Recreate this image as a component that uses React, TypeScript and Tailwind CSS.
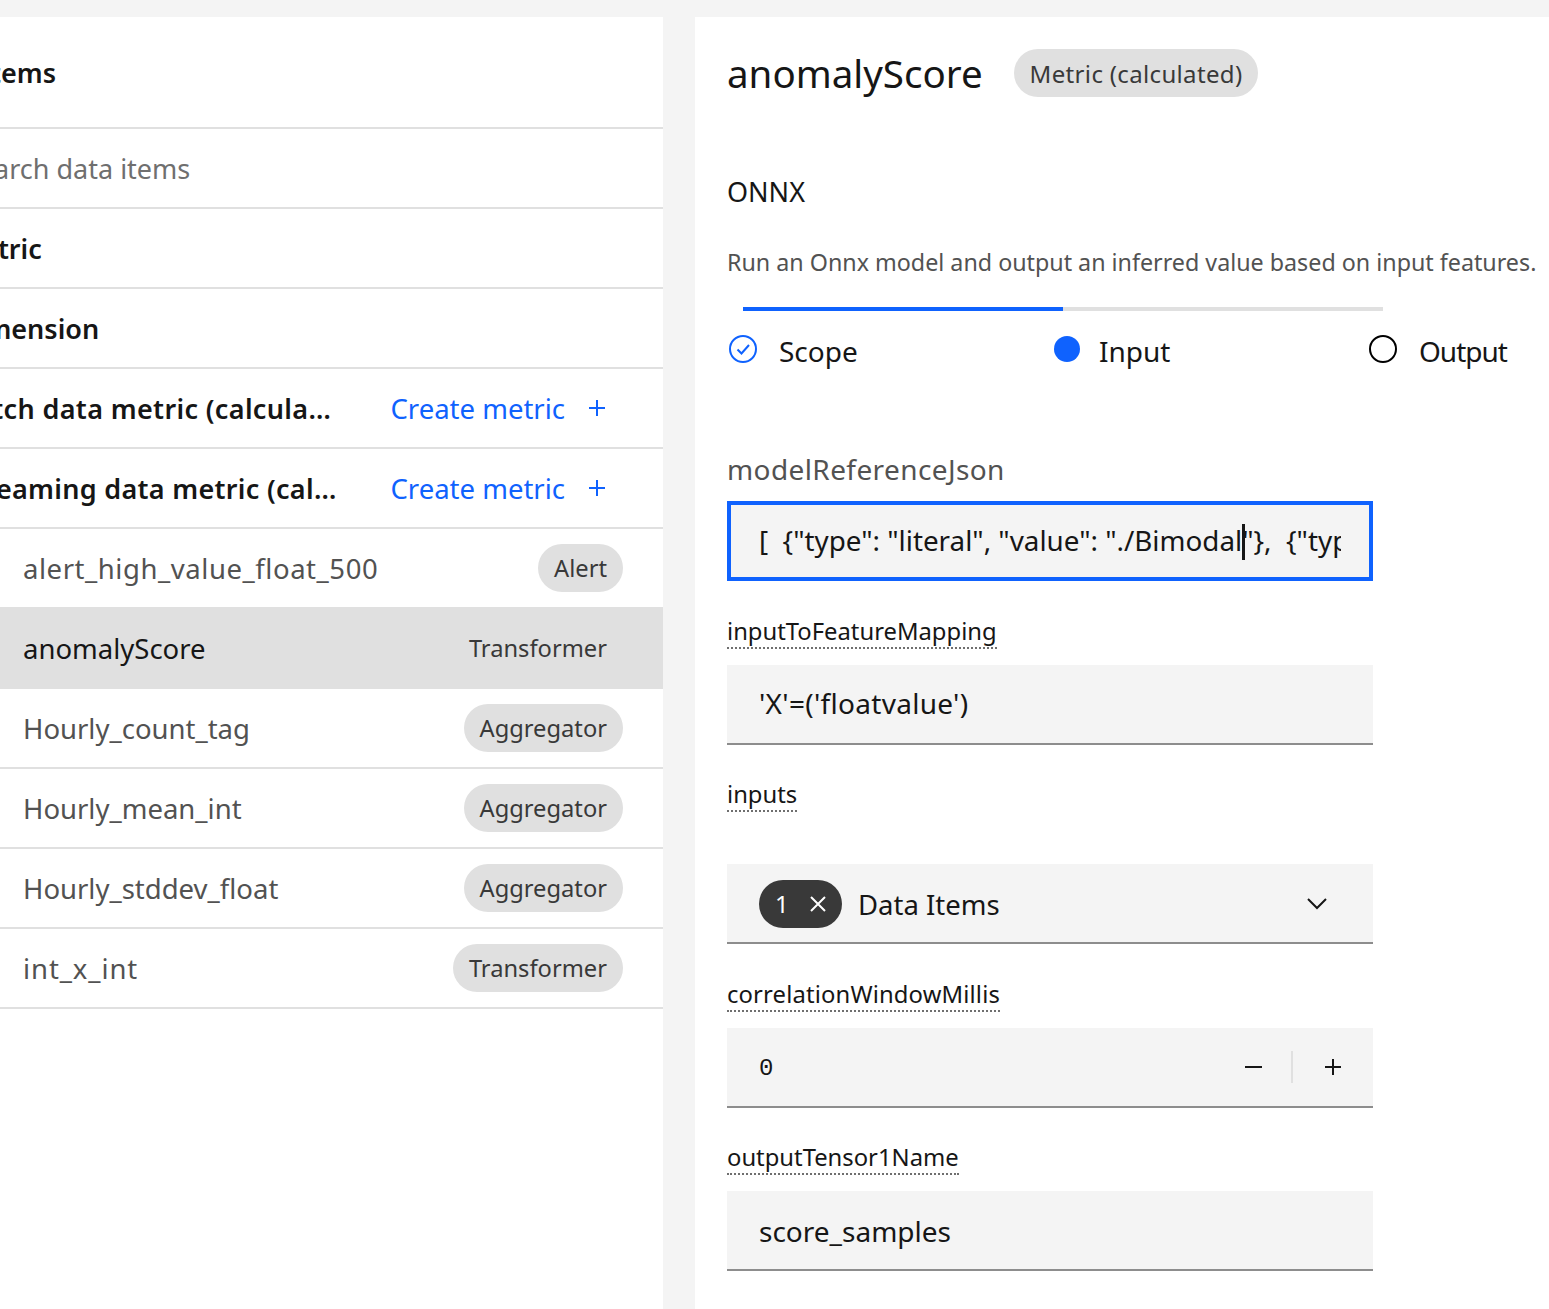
const font = "font-['Noto_Sans','Open_Sans',sans-serif]";

function Tag({ label, flat, className }: { label: string; flat?: boolean; className?: string }) {
  return (
    <span
      className={`flex h-12 shrink-0 items-center rounded-full px-4 pt-[2px] leading-none text-[#393939] ${
        flat ? '' : 'bg-[#e0e0e0]'
      } ${className ?? 'text-[23.7px]'}`}
    >
      {label}
    </span>
  );
}

function HeaderRow({ text, textClass, action, height }: { text: string; textClass: string; action?: boolean; height?: string }) {
  return (
    <div className={`flex items-center border-b-2 border-[#e0e0e0] pr-[56px] ${height ?? 'h-20'}`}>
      <span className={`min-w-0 truncate pt-[2px] text-[27px] font-semibold text-[#161616] ${textClass}`}>{text}</span>
      {action && (
        <span className="ml-auto flex shrink-0 items-center gap-[22px] pl-4 text-[27.5px] text-[#0f62fe]">
          <span className="pt-[2px]">Create metric</span>
          <svg width="20" height="20" viewBox="0 0 20 20" fill="none" stroke="#0f62fe" strokeWidth="2">
            <path d="M10 2v16M2 10h16" />
          </svg>
        </span>
      )}
    </div>
  );
}

function ItemRow({ name, tag, selected, nameClass }: { name: string; tag: string; selected?: boolean; nameClass?: string }) {
  return (
    <div
      className={`flex items-center justify-between pl-[64px] pr-10 ${
        selected ? 'mt-[-2px] h-[82px] bg-[#e0e0e0]' : 'h-20 border-b-2 border-[#e0e0e0]'
      }`}
    >
      <span className={`pt-[2px] text-[27.5px] ${selected ? 'text-[#161616]' : 'text-[#525252]'} ${nameClass ?? ''}`}>{name}</span>
      <Tag label={tag} flat={selected} />
    </div>
  );
}

function TipLabel({ text, className, textClass }: { text: string; className?: string; textClass?: string }) {
  return (
    <div className={`flex ${className ?? ''}`}>
      <span className={`border-b-2 border-dotted border-[#6f6f6f] text-[23.8px] leading-[32px] text-[#161616] ${textClass ?? ''}`}>
        {text}
      </span>
    </div>
  );
}

function TextBox({ value, textClass }: { value: string; textClass?: string }) {
  return (
    <div className="flex h-20 w-[646px] items-center border-b-2 border-[#8d8d8d] bg-[#f4f4f4] px-8 text-[28px] text-[#161616]">
      <span className={textClass}>{value}</span>
    </div>
  );
}

function Step({ label, labelClass, children }: { label: string; labelClass?: string; children: React.ReactNode }) {
  return (
    <div className="flex h-[36px] w-80 shrink-0 items-center">
      <span className="flex w-8 shrink-0 items-center justify-center">{children}</span>
      <span className={`ml-5 pt-1 text-[28px] text-[#161616] ${labelClass ?? ''}`}>{label}</span>
    </div>
  );
}

export default function App() {
  return (
    <div className={`flex h-[1309px] w-[1549px] items-stretch overflow-hidden bg-[#f4f4f4] pt-[17px] ${font}`}>
      {/* Data items panel, scrolled off the left edge */}
      <aside className="ml-[-41px] w-[704px] shrink-0 bg-white">
        <HeaderRow text="Data items" textClass="ml-[-46px]" height="h-[112px]" />
        <div className="flex h-20 items-center border-b-2 border-[#e0e0e0] text-[27px] text-[#6f6f6f]">
          <span className="ml-[5px] pt-[2px]">Search data items</span>
        </div>
        <HeaderRow text="Metric" textClass="ml-[-2px]" />
        <HeaderRow text="Dimension" textClass="ml-[-1px]" />
        <HeaderRow text="Batch data metric (calculated)" textClass="ml-[-1px] max-w-[384px] tracking-[0.35px]" action />
        <HeaderRow text="Streaming data metric (calculated)" textClass="ml-[-1px] max-w-[388px] tracking-[0.3px]" action />
        <ItemRow name="alert_high_value_float_500" tag="Alert" nameClass="tracking-[0.55px]" />
        <ItemRow name="anomalyScore" tag="Transformer" selected />
        <ItemRow name="Hourly_count_tag" tag="Aggregator" />
        <ItemRow name="Hourly_mean_int" tag="Aggregator" />
        <ItemRow name="Hourly_stddev_float" tag="Aggregator" />
        <ItemRow name="int_x_int" tag="Transformer" nameClass="tracking-[0.9px]" />
      </aside>

      {/* Function configuration panel */}
      <main className="ml-8 min-w-0 flex-1 overflow-hidden bg-white pl-8">
        <div className="flex h-[112px] items-start pt-8">
          <h1 className="text-[38.5px] font-normal leading-[48px] text-[#161616]">anomalyScore</h1>
          <Tag label="Metric (calculated)" className="ml-[31px] text-[24px] tracking-[0.34px]" />
        </div>

        <h2 className="mt-[45px] text-[27px] leading-9 text-[#161616]">ONNX</h2>
        <p className="mt-9 whitespace-nowrap text-[23.27px] leading-8 text-[#525252]">
          Run an Onnx model and output an inferred value based on input features.
        </p>

        <div className="ml-4 mt-[29px] h-1 w-[640px] bg-[#e0e0e0]">
          <div className="h-1 w-80 bg-[#0f62fe]" />
        </div>
        <div className="mt-5 flex">
          <Step label="Scope">
            <svg width="32" height="32" viewBox="0 0 32 32" fill="none" stroke="#0f62fe" strokeWidth="2">
              <circle cx="16" cy="16" r="13" />
              <path d="M10.5 16.5l4 4 7.5-8.5" />
            </svg>
          </Step>
          <Step label="Input">
            <span className="ml-2 h-[26px] w-[26px] shrink-0 rounded-full bg-[#0f62fe]" />
          </Step>
          <Step label="Output" labelClass="tracking-[-1px]">
            <span className="h-[28px] w-[28px] shrink-0 rounded-full border-2 border-black" />
          </Step>
        </div>

        <div className="mt-[84px] text-[28px] leading-9 tracking-[0.4px] text-[#525252]">modelReferenceJson</div>
        <div className="mt-[14px] flex h-20 w-[646px] items-center border-4 border-[#0f62fe] bg-[#f4f4f4] px-7 text-[27.8px] text-[#161616]">
          <div className="overflow-hidden whitespace-pre">
            {'[  {"type": "literal", "value": "./Bimodal'}
            <span className="relative inline-block w-0">
              <span className="absolute top-[-27px] left-0 h-9 w-[3px] bg-[#161616]" />
            </span>
            {'"},  {"type": "literal", "value": "model.onnx"}]'}
          </div>
        </div>

        <TipLabel text="inputToFeatureMapping" className="mt-[34px]" />
        <div className="mt-4">
          <TextBox value="'X'=('floatvalue')" textClass="pb-[2px] tracking-[0.3px]" />
        </div>

        <TipLabel text="inputs" className="mt-[33px]" />
        <div className="mt-[52px] flex h-20 w-[646px] items-center border-b-2 border-[#8d8d8d] bg-[#f4f4f4] pl-8 pr-[44px] pt-[2px]">
          <span className="flex h-12 w-[83px] shrink-0 items-center rounded-full bg-[#393939] pl-4 text-[24px] text-white">
            1
            <svg className="ml-5" width="18" height="18" viewBox="0 0 18 18" fill="none" stroke="#fff" strokeWidth="2">
              <path d="M2 2l14 14M16 2L2 16" />
            </svg>
          </span>
          <span className="ml-[16px] pt-[2px] text-[27.5px] text-[#161616]">Data Items</span>
          <svg className="ml-auto" width="24" height="16" viewBox="0 0 24 16" fill="none" stroke="#161616" strokeWidth="2">
            <path d="M3 3l9 9 9-9" />
          </svg>
        </div>

        <TipLabel text="correlationWindowMillis" className="mt-[34px]" textClass="tracking-[0.15px]" />
        <div className="mt-4 flex h-20 w-[646px] items-center border-b-2 border-[#8d8d8d] bg-[#f4f4f4] pl-8">
          <span className="pt-1 font-['Liberation_Mono',monospace] text-[24px] text-[#161616]">0</span>
          <span className="ml-auto flex w-[76px] items-center justify-center">
            <span className="h-[2px] w-[17px] bg-[#161616]" />
          </span>
          <span className="h-8 w-[2px] bg-[#e0e0e0]" />
          <span className="flex w-20 items-center justify-center">
            <svg width="18" height="18" viewBox="0 0 18 18" fill="none" stroke="#161616" strokeWidth="2">
              <path d="M9 1v16M1 9h16" />
            </svg>
          </span>
        </div>

        <TipLabel text="outputTensor1Name" className="mt-[33px]" />
        <div className="mt-4">
          <TextBox value="score_samples" textClass="pt-px" />
        </div>
      </main>
    </div>
  );
}
